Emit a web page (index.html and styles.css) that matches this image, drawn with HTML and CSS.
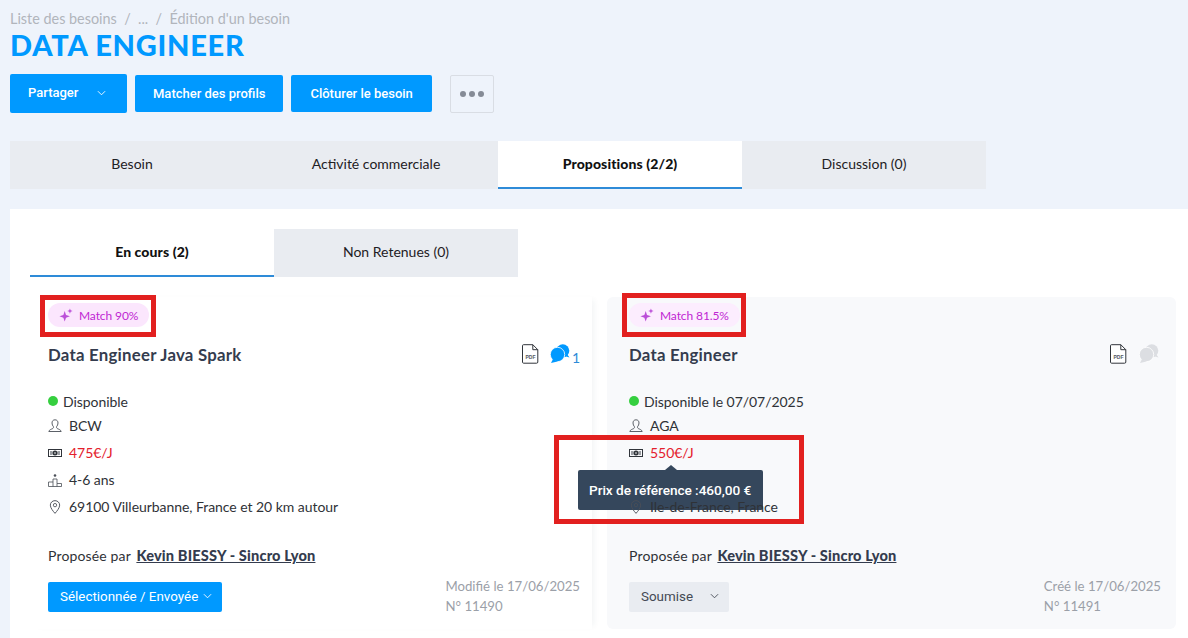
FILE: index.html
```html
<!DOCTYPE html>
<html lang="fr">
<head>
    <title>Édition d'un besoin</title>
    <link rel="stylesheet" href="styles.css">
</head>
<body>
    <svg class="defs" width="0" height="0">
        <symbol id="ic-spark" viewBox="0 0 16 16"><path d="M6.5 3.5 8 8l4.5 1.5L8 11l-1.5 4.5L5 11 .5 9.500 5 8z"/><path d="M12.500 .5l.8 2.200 2.200.8-2.200.8-.8 2.200-.8-2.200-2.200-.8 2.200-.8z"/></symbol>
        <symbol id="ic-user" viewBox="0 0 14 14"><path d="M7 .8c-2 0-3 1.400-3 3.200 0 1.500.6 2.800 1.400 3.600.3.800 0 1.500-.8 2-1.100.6-3.300 1-3.800 2.900h12.400c-.5-1.900-2.700-2.300-3.800-2.900-.8-.5-1.100-1.200-.8-2C9.400 6.800 10 5.500 10 4c0-1.800-1-3.200-3-3.200z" fill="none" stroke="#4a4f57" stroke-width=".9"/></symbol>
        <symbol id="ic-money" viewBox="0 0 14 10"><rect x=".5" y="1.500" width="13" height="7" fill="none" stroke="#30343a"/><path d="M2 3h2.500v4H2zM9.500 3H12v4H9.500z" fill="#9a9da2"/><circle cx="7" cy="5" r="2.500" fill="#30343a"/><circle cx="7" cy="5" r=".8" fill="#fff"/></symbol>
        <symbol id="ic-level" viewBox="0 0 14 14"><circle cx="7" cy="2.500" r="1.300" fill="#4a4f57"/><path d="M.5 13.500V9h4.500V6h4v4.500h4.500v3z" fill="none" stroke="#4a4f57" stroke-width=".8"/><path d="M5 9v4.500M9 10.500v3" stroke="#4a4f57" stroke-width=".8"/></symbol>
        <symbol id="ic-pin" viewBox="0 0 12 15"><path d="M6 .7C3 .7 1 3 1 5.500c0 3 3 6.500 5 8.800 2-2.300 5-5.800 5-8.800C11 3 9 .7 6 .7z" fill="none" stroke="#4a4f57"/><circle cx="6" cy="5.500" r="1.800" fill="none" stroke="#4a4f57" stroke-width=".9"/></symbol>
        <symbol id="ic-page" viewBox="0 0 17 20"><path d="M1.500.7h9.300l5 5v12.300a1.200 1.200 0 0 1-1.200 1.200H1.500A1.200 1.200 0 0 1 .5 18V1.700A1 1 0 0 1 1.500.7z" fill="#fff" stroke="#30343a"/><path d="M10.800.7v5h5" fill="none" stroke="#30343a"/></symbol>
        <symbol id="ic-chat" viewBox="0 0 20 20"><circle cx="12.800" cy="6.800" r="6.500"/><path d="M17 10l2.500 3.500-5-1.500z"/><circle cx="7.500" cy="10.500" r="7.200" stroke="#fff" stroke-width=".8"/><path d="M3 15l-2 4 6.500-1.500z"/></symbol>
        <symbol id="ic-chevron" viewBox="0 0 10 6"><path d="M1 1l4 4 4-4" fill="none" stroke="currentColor"/></symbol>
    </svg>

    <nav class="crumbs">Liste des besoins &nbsp;/&nbsp; ... &nbsp;/&nbsp; Édition d'un besoin</nav>
    <h1 class="page-title">DATA ENGINEER</h1>

    <div class="actions">
        <button class="btn btn-share">Partager <svg class="chev"><use href="#ic-chevron"/></svg></button>
        <button class="btn">Matcher des profils</button>
        <button class="btn btn-close">Clôturer le besoin</button>
        <button class="btn-more"><i></i><i></i><i></i></button>
    </div>

    <div class="tabs">
        <a class="tab">Besoin</a>
        <a class="tab">Activité commerciale</a>
        <a class="tab active">Propositions (2/2)</a>
        <a class="tab">Discussion (0)</a>
    </div>

    <section class="panel">
        <div class="tabs">
            <a class="tab active">En cours (2)</a>
            <a class="tab">Non Retenues (0)</a>
        </div>

        <div class="cards">
            <article class="card">
                <div class="match-wrap">
                    <span class="match"><svg class="spark"><use href="#ic-spark"/></svg>Match 90%</span>
                    <span class="red-box box-left"></span>
                </div>
                <div class="card-head">
                    <h2>Data Engineer Java Spark</h2>
                    <div class="card-icons">
                        <svg class="pdf" viewBox="0 0 17 20"><use href="#ic-page"/><text x="8.500" y="14.500" text-anchor="middle">PDF</text></svg>
                        <svg class="chat"><use href="#ic-chat"/></svg><span class="chat-count">1</span>
                    </div>
                </div>
                <ul class="facts">
                    <li class="avail"><span class="dot"></span>Disponible</li>
                    <li class="row-user"><svg class="ic"><use href="#ic-user"/></svg>BCW</li>
                    <li class="price"><svg class="ic"><use href="#ic-money"/></svg>475€/J</li>
                    <li><svg class="ic"><use href="#ic-level"/></svg>4-6 ans</li>
                    <li><svg class="ic"><use href="#ic-pin"/></svg>69100 Villeurbanne, France et 20 km autour</li>
                </ul>
                <p class="owner">Proposée par <a>Kevin BIESSY - Sincro Lyon</a></p>
                <div class="card-foot">
                    <button class="status status-sent">Sélectionnée / Envoyée <svg class="chev"><use href="#ic-chevron"/></svg></button>
                    <div class="meta">Modifié le 17/06/2025<br>N° 11490</div>
                </div>
            </article>

            <article class="card card-alt">
                <div class="match-wrap">
                    <span class="match match-soft"><svg class="spark"><use href="#ic-spark"/></svg>Match 81.5%</span>
                    <span class="red-box box-right"></span>
                </div>
                <div class="card-head">
                    <h2>Data Engineer</h2>
                    <div class="card-icons">
                        <svg class="pdf" viewBox="0 0 17 20"><use href="#ic-page"/><text x="8.500" y="14.500" text-anchor="middle">PDF</text></svg>
                        <svg class="chat chat-off"><use href="#ic-chat"/></svg>
                    </div>
                </div>
                <ul class="facts">
                    <li class="avail"><span class="dot"></span>Disponible le 07/07/2025</li>
                    <li class="row-user"><svg class="ic"><use href="#ic-user"/></svg>AGA</li>
                    <li class="price">
                        <svg class="ic"><use href="#ic-money"/></svg>550€/J
                        <span class="red-box box-price"></span>
                        <span class="tooltip">Prix de référence :460,00 €</span>
                    </li>
                    <li>&nbsp;</li>
                    <li><svg class="ic"><use href="#ic-pin"/></svg>Ile-de-France, France</li>
                </ul>
                <p class="owner">Proposée par <a>Kevin BIESSY - Sincro Lyon</a></p>
                <div class="card-foot">
                    <button class="status status-sub">Soumise <svg class="chev"><use href="#ic-chevron"/></svg></button>
                    <div class="meta">Créé le 17/06/2025<br>N° 11491</div>
                </div>
            </article>
        </div>
    </section>
</body>
</html>
```

FILE: styles.css
```css
:root {
    --blue: #0099ff;
    --tab-bg: #e9ecf1;
    --text: #2f3237;
    --navy: #343c4e;
}

body {
    margin: 0;
    padding: 10px 0 0 10px;
    height: 638px;
    box-sizing: border-box;
    overflow: hidden;
    background-color: #eef3fb;
    font-family: 'Lato', sans-serif;
    font-size: 14px;
    color: var(--text);
}

.defs {
    position: absolute;
}

.crumbs {
    font-size: 14.4px;
    line-height: 18px;
    color: #b1b5bc;
}

.page-title {
    margin: 0;
    font-size: 29px;
    line-height: 34px;
    font-weight: 900;
    letter-spacing: .75px;
    color: var(--blue);
}

.actions {
    display: flex;
    align-items: center;
    gap: 8px;
    margin-top: 12px;
    height: 39px;
}

.btn {
    height: 37px;
    padding: 0 18px;
    border: none;
    border-radius: 2px;
    background-color: var(--blue);
    color: #fff;
    font-family: 'Roboto', sans-serif;
    font-size: 13px;
    font-weight: 500;
}

.btn-close {
    padding: 0 19px;
}

.btn-share {
    display: flex;
    align-items: center;
    gap: 0;
    height: 39px;
    width: 117px;
    padding-bottom: 2px;
}

.btn-share .chev {
    margin-left: 19px;
}

.btn-more {
    display: flex;
    align-items: center;
    justify-content: center;
    gap: 3px;
    width: 44px;
    height: 38px;
    margin-left: 10px;
    border: 1px solid #d9dde4;
    border-radius: 2px;
    background: none;
}

.btn-more i {
    width: 6px;
    height: 6px;
    border-radius: 50%;
    background-color: #858b96;
}

.chev {
    width: 9px;
    height: 6px;
}

.tabs {
    display: flex;
    width: max-content;
    background-color: var(--tab-bg);
}

body > .tabs {
    margin-top: 28px;
}

.tab {
    width: 244px;
    height: 48px;
    line-height: 46px;
    text-align: center;
    font-size: 14px;
    color: #1e2024;
    box-sizing: border-box;
}

.tab.active {
    background-color: #fff;
    border-bottom: 2px solid #2e8bd8;
    font-weight: 900;
    letter-spacing: .1px;
    color: #111;
}

.panel {
    margin-top: 20px;
    padding: 20px 12px 0 20px;
    background-color: #fff;
    height: 440px;
    box-sizing: border-box;
}

.cards {
    display: grid;
    grid-template-columns: 562px 569px;
    gap: 15px;
    margin-top: 20px;
}

.card {
    height: 332px;
    padding: 0 12px 0 18px;
    box-sizing: border-box;
    background-color: #fff;
    box-shadow: 5px 0 6px -3px rgba(40, 60, 90, .06);
}

.card-alt {
    padding: 0 17px 0 22px;
    border-radius: 6px;
    background-color: #f8f9fb;
    box-shadow: none;
}

.match-wrap {
    position: relative;
    height: 38px;
    padding-top: 6px;
    box-sizing: border-box;
}

.match {
    display: inline-flex;
    align-items: center;
    height: 24px;
    padding: 0 11px;
    border-radius: 12px;
    background-color: #fbe6fd;
    color: #c026d3;
    font-size: 12px;
    letter-spacing: -.1px;
}

.match-soft {
    background-color: #fcedfe;
}

.spark {
    width: 14px;
    height: 14px;
    margin-right: 6px;
    fill: #bb4fd8;
}

.red-box {
    position: absolute;
    border: 5px solid #e2201f;
    box-sizing: border-box;
    pointer-events: none;
}

.box-left {
    left: -8px;
    top: -2px;
    width: 116px;
    height: 42px;
}

.box-right {
    left: -7px;
    top: -4px;
    width: 124px;
    height: 44px;
}

.box-price {
    left: -75px;
    top: -4px;
    width: 250px;
    height: 89px;
}

.card-head {
    display: flex;
    justify-content: space-between;
    align-items: center;
    height: 24px;
    margin-top: 7px;
}

.card-head h2 {
    margin: 0;
    font-size: 16.8px;
    font-weight: 700;
    letter-spacing: .25px;
    color: var(--navy);
}

.card-icons {
    display: flex;
    align-items: center;
}

.pdf {
    width: 17px;
    height: 20px;
}

.pdf text {
    font-family: 'Liberation Sans', sans-serif;
    font-size: 5px;
    font-weight: 700;
    fill: #555a62;
}

.chat {
    width: 20px;
    height: 20px;
    margin-left: 11px;
    fill: var(--blue);
}

.chat-off {
    fill: #dcdee2;
    margin-left: 12px;
}

.chat-count {
    margin: 8px 0 0 2px;
    font-size: 14px;
    line-height: 14px;
    color: #2e8bd8;
}

.facts {
    list-style: none;
    margin: 24px 0 0;
    padding: 0;
}

.facts li {
    position: relative;
    display: flex;
    align-items: center;
    height: 27px;
    font-size: 14px;
    letter-spacing: -.05px;
}

.facts .avail {
    height: 22px;
}

.dot {
    width: 10px;
    height: 10px;
    margin-right: 5px;
    border-radius: 50%;
    background-color: #35cf3f;
}

.ic {
    width: 14px;
    height: 14px;
    margin-right: 7px;
    flex-shrink: 0;
}

.price {
    color: #e4202c;
}

.tooltip {
    position: absolute;
    left: -51px;
    top: 31px;
    padding: 0 12px 0 11px;
    height: 40px;
    line-height: 40px;
    border-radius: 2px;
    background-color: #35475c;
    color: #fff;
    font-family: 'Roboto', sans-serif;
    font-size: 13.65px;
    font-weight: 500;
    white-space: nowrap;
}

.tooltip:before {
    content: "";
    position: absolute;
    left: 87px;
    top: -5px;
    border-left: 6px solid transparent;
    border-right: 6px solid transparent;
    border-bottom: 5px solid #35475c;
}

.owner {
    margin: 27px 0 0;
    font-size: 14px;
    line-height: 18px;
    letter-spacing: .15px;
}

.owner a {
    margin-left: 2px;
    font-size: 14.6px;
    font-weight: 900;
    color: var(--navy);
    text-decoration: underline;
}

.card-foot {
    display: flex;
    justify-content: space-between;
    align-items: flex-end;
    margin-top: 9px;
    height: 42px;
}

.status {
    display: flex;
    align-items: center;
    justify-content: space-between;
    height: 30px;
    margin-bottom: 4px;
    padding: 0 10px 2px 12px;
    border: none;
    border-radius: 2px;
    font-family: 'Roboto', sans-serif;
    font-size: 13.4px;
}

.status-sent {
    width: 174px;
    background-color: var(--blue);
    color: #fff;
}

.status-sub {
    width: 100px;
    background-color: #e9ecf1;
    color: #444a54;
}

.meta {
    white-space: nowrap;
    font-size: 13.2px;
    line-height: 20px;
    color: #9ba0a8;
}

.card-alt .meta {
    margin-right: -2px;
}
```
